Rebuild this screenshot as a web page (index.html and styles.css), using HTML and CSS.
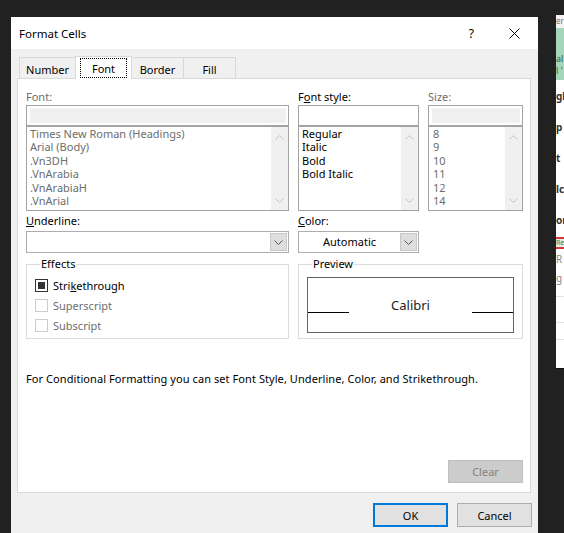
FILE: index.html
```html
<!DOCTYPE html>
<html lang="en">
<head>
<meta charset="utf-8">
<title>Format Cells</title>
<link rel="stylesheet" href="styles.css">
</head>
<body>
<div class="screen">
  <div class="dialog">
    <div class="titlebar">
      <span class="title">Format Cells</span>
      <span class="help">?</span>
      <svg class="close" width="11" height="11" viewBox="0 0 11 11"><path d="M0.5 0.5L10.5 10.5M10.5 0.5L0.5 10.5" stroke="#000" stroke-width="1" fill="none"/></svg>
    </div>
    <div class="body">
      <div class="tabs">
        <div class="tab tab-number">Number</div>
        <div class="tab tab-font active"><span class="focus">Font</span></div>
        <div class="tab tab-border">Border</div>
        <div class="tab tab-fill">Fill</div>
      </div>
      <div class="panel">
        <div class="top-grid">
          <div class="col">
            <div class="label disabled">Font:</div>
            <div class="edit edit-disabled"><div class="edit-fill"></div></div>
            <div class="list">
              <div class="items disabled">
                <div class="item">Times New Roman (Headings)</div>
                <div class="item">Arial (Body)</div>
                <div class="item">.Vn3DH</div>
                <div class="item">.VnArabia</div>
                <div class="item">.VnArabiaH</div>
                <div class="item">.VnArial</div>
              </div>
              <div class="scrollbar">
                <svg width="9" height="5" viewBox="0 0 9 5"><path d="M0.5 4.5L4.5 0.5L8.5 4.5" fill="none" stroke="#c4c4c4"/></svg>
                <svg width="9" height="5" viewBox="0 0 9 5"><path d="M0.5 0.5L4.5 4.5L8.5 0.5" fill="none" stroke="#c4c4c4"/></svg>
              </div>
            </div>
            <div class="label label-second"><u>U</u>nderline:</div>
            <div class="combo">
              <div class="combo-value"></div>
              <div class="combo-btn"><svg width="9" height="5" viewBox="0 0 9 5"><path d="M0.5 0.5L4.5 4.5L8.5 0.5" fill="none" stroke="#555"/></svg></div>
            </div>
          </div>
          <div class="col">
            <div class="label">F<u>o</u>nt style:</div>
            <div class="edit"></div>
            <div class="list">
              <div class="items">
                <div class="item">Regular</div>
                <div class="item">Italic</div>
                <div class="item">Bold</div>
                <div class="item">Bold Italic</div>
              </div>
              <div class="scrollbar">
                <svg width="9" height="5" viewBox="0 0 9 5"><path d="M0.5 4.5L4.5 0.5L8.5 4.5" fill="none" stroke="#c4c4c4"/></svg>
                <svg width="9" height="5" viewBox="0 0 9 5"><path d="M0.5 0.5L4.5 4.5L8.5 0.5" fill="none" stroke="#c4c4c4"/></svg>
              </div>
            </div>
            <div class="label label-second"><u>C</u>olor:</div>
            <div class="combo">
              <div class="combo-value centered">Automatic</div>
              <div class="combo-btn"><svg width="9" height="5" viewBox="0 0 9 5"><path d="M0.5 0.5L4.5 4.5L8.5 0.5" fill="none" stroke="#555"/></svg></div>
            </div>
          </div>
          <div class="col">
            <div class="label disabled">Size:</div>
            <div class="edit edit-disabled"><div class="edit-fill"></div></div>
            <div class="list">
              <div class="items disabled items-size">
                <div class="item">8</div>
                <div class="item">9</div>
                <div class="item">10</div>
                <div class="item">11</div>
                <div class="item">12</div>
                <div class="item">14</div>
              </div>
              <div class="scrollbar">
                <svg width="9" height="5" viewBox="0 0 9 5"><path d="M0.5 4.5L4.5 0.5L8.5 4.5" fill="none" stroke="#c4c4c4"/></svg>
                <svg width="9" height="5" viewBox="0 0 9 5"><path d="M0.5 0.5L4.5 4.5L8.5 0.5" fill="none" stroke="#c4c4c4"/></svg>
              </div>
            </div>
          </div>
        </div>
        <div class="group-grid">
          <fieldset class="group effects">
            <legend>Effects</legend>
            <div class="check-row">
              <span class="checkbox checked"><span class="mark"></span></span>
              <span>Stri<u>k</u>ethrough</span>
            </div>
            <div class="check-row disabled">
              <span class="checkbox off"></span>
              <span>Superscript</span>
            </div>
            <div class="check-row disabled">
              <span class="checkbox off"></span>
              <span>Subscript</span>
            </div>
          </fieldset>
          <fieldset class="group preview">
            <legend>Preview</legend>
            <div class="preview-box">
              <span class="baseline"></span>
              <span class="sample">Calibri</span>
              <span class="baseline"></span>
            </div>
          </fieldset>
        </div>
        <p class="note">For Conditional Formatting you can set Font Style, Underline, Color, and Strikethrough.</p>
        <button class="btn btn-clear" disabled>Clear</button>
      </div>
      <div class="actions">
        <button class="btn btn-ok">OK</button>
        <button class="btn">Cancel</button>
      </div>
    </div>
  </div>
  <div class="side">
    <div class="s-head">er</div>
    <div class="s-green"><span>al</span><span>l '</span></div>
    <div class="s-row">gl</div>
    <div class="s-row">p</div>
    <div class="s-row">t</div>
    <div class="s-row">lc</div>
    <div class="s-row">or</div>
    <div class="s-red">Re</div>
    <div class="s-light">R</div>
    <div class="s-light">g</div>
    <div class="s-sep"></div>
    <div class="s-sep s-sep-2"></div>
    <div class="s-sep s-sep-3"></div>
  </div>
</div>
</body>
</html>
```
FILE: styles.css
```css
* { box-sizing: border-box; }

html, body {
  margin: 0;
  padding: 0;
}

body {
  width: 564px;
  height: 533px;
  overflow: hidden;
  background: #212121;
  font-family: "Noto Sans", "Open Sans", sans-serif;
  font-size: 11px;
  color: #000;
}

.screen {
  display: flex;
  height: 533px;
  overflow: hidden;
}

.dialog {
  flex: 0 0 527px;
  width: 527px;
  height: 540px;
  margin: 17px 0 0 11px;
  background: #f0f0f0;
}

.titlebar {
  height: 32px;
  background: #fff;
  display: flex;
  align-items: center;
  padding-left: 8px;
}

.title {
  font-size: 11.5px;
}

.help {
  margin-left: auto;
  margin-right: 35px;
  font-size: 12px;
}

.close {
  margin-right: 18px;
  display: block;
}

.body {
  padding: 7px 7px 0 6px;
}

/* Tabs */
.tabs {
  display: flex;
  align-items: flex-end;
  height: 22px;
  margin-left: 2px;
}

.tab {
  height: 21px;
  border: 1px solid #d9d9d9;
  border-bottom: none;
  background: #f0f0f0;
  display: flex;
  align-items: center;
  justify-content: center;
  padding-top: 2px;
  margin-left: -1px;
}

.tab-number { width: 57px; margin-left: 0; }
.tab-font { width: 57px; }
.tab-border { width: 53px; }
.tab-fill { width: 53px; }

.tab.active {
  height: 23px;
  margin-bottom: -1px;
  background: #fff;
  position: relative;
  z-index: 1;
  padding: 1px 4px 1px 4px;
  align-items: stretch;
}

.focus {
  flex: 1;
  border: 1px dotted #000;
  display: flex;
  align-items: center;
  justify-content: center;
  padding-top: 1px;
}

/* Panel */
.panel {
  height: 415px;
  background: #fff;
  border: 1px solid #d9d9d9;
  padding: 10px 7px 9px 8px;
  display: flex;
  flex-direction: column;
}

.top-grid {
  display: grid;
  grid-template-columns: 263px 121px 95px;
  column-gap: 9px;
}

.col {
  display: flex;
  flex-direction: column;
}

.label {
  line-height: 15px;
  height: 15px;
  margin-bottom: 1px;
  white-space: nowrap;
}

.label-second {
  margin-top: 2px;
  margin-bottom: 3px;
}

.disabled { color: #6d6d6d; }

.edit {
  height: 21px;
  border: 1px solid #a3a3a3;
  background: #fff;
}

.edit-disabled {
  padding: 2px 2px 2px 3px;
}

.edit-fill {
  height: 100%;
  background: #f0f0f0;
}

.list {
  height: 85px;
  border: 1px solid #a3a3a3;
  display: flex;
  background: #fff;
}

.items {
  flex: 1;
  padding: 0 0 0 3px;
  overflow: hidden;
}

.items-size { padding-left: 4px; }

.item {
  line-height: 13.4px;
  height: 13.4px;
  white-space: nowrap;
}

.scrollbar {
  width: 17px;
  background: #f0f0f0;
  display: flex;
  flex-direction: column;
  align-items: center;
  justify-content: space-between;
  padding: 8px 0 7px;
}

.scrollbar svg { display: block; }

.combo {
  height: 22px;
  border: 1px solid #adadad;
  background: #fff;
  display: flex;
}

.combo-value {
  flex: 1;
  line-height: 19px;
}

.combo-value.centered {
  text-align: center;
}

.combo-btn {
  width: 17px;
  margin: 1px 1px 1px 0;
  background: #dedede;
  border: 1px solid #c8c8c8;
  display: flex;
  align-items: center;
  justify-content: center;
}

.combo-btn svg { display: block; }

/* Group boxes */
.group-grid {
  display: grid;
  grid-template-columns: 263px 225px;
  column-gap: 9px;
  margin-top: 4px;
}

.group {
  margin: 0;
  min-width: 0;
  border: 1px solid #dcdcdc;
  padding: 0;
}

.group legend {
  margin-left: 5px;
  padding: 0 1px;
  line-height: 14px;
  height: 14px;
}

.effects {
  padding: 4px 0 3px 8px;
}

.check-row {
  height: 20px;
  display: flex;
  align-items: center;
  gap: 5px;
  white-space: nowrap;
}

.checkbox {
  width: 13px;
  height: 13px;
  border: 1px solid #333;
  background: #fff;
  padding: 2px;
  flex: 0 0 13px;
}

.checkbox .mark {
  display: block;
  width: 7px;
  height: 7px;
  background: #333;
}

.checkbox.off {
  border-color: #cccccc;
}

.preview {
  padding: 6px 8px 5px;
}

.preview-box {
  height: 56px;
  border: 1px solid #646464;
  display: grid;
  grid-template-columns: 41px 1fr 41px;
  align-items: center;
}

.baseline {
  height: 1px;
  background: #000;
  margin-top: 14px;
}

.sample {
  text-align: center;
  font-size: 13px;
  color: #222;
}

.note {
  margin: 32px 0 0 0;
  line-height: 15px;
  white-space: nowrap;
  letter-spacing: 0.07px;
}

/* Buttons */
.btn {
  font-family: "Noto Sans", "Open Sans", sans-serif;
  font-size: 11px;
  width: 75px;
  height: 23px;
  background: #e1e1e1;
  border: 1px solid #adadad;
  color: #000;
  padding: 0;
  margin: 0;
}

.btn-clear {
  margin-top: auto;
  align-self: flex-end;
  background: #cccccc;
  border-color: #bfbfbf;
  color: #838383;
}

.actions {
  display: flex;
  justify-content: flex-end;
  gap: 9px;
  margin-top: 10px;
  margin-right: -1px;
}

.actions .btn { height: 24px; }

.btn-ok {
  border: 1px solid #0078d7;
  box-shadow: inset 0 0 0 1px #0078d7;
}

/* Background spreadsheet strip */
.side {
  flex: 0 0 8px;
  width: 8px;
  margin-left: auto;
  margin-top: 15px;
  height: 354px;
  background: #fff;
  border-bottom: 1px solid #111;
  overflow: hidden;
  display: flex;
  flex-direction: column;
  font-size: 10px;
  line-height: 12px;
  white-space: nowrap;
}

.s-head {
  height: 13px;
  color: #777;
  background: #f3f3f3;
  font-size: 8px;
}

.s-green {
  height: 52px;
  background: #a5d6b9;
  color: #2f5d43;
  display: flex;
  flex-direction: column;
  justify-content: flex-end;
  gap: 1px;
  padding-bottom: 4px;
  font-size: 9px;
  line-height: 11px;
}

.s-row {
  height: 31px;
  display: flex;
  align-items: center;
  font-weight: bold;
  color: #333;
}

.s-red {
  height: 12px;
  margin-top: 2px;
  border-top: 2px solid #d9383a;
  border-bottom: 2px solid #d9383a;
  background: #dff0e5;
  color: #3a7a55;
  font-size: 7px;
  line-height: 8px;
}

.s-light {
  height: 19px;
  display: flex;
  align-items: center;
  color: #888;
}

.s-sep {
  height: 1px;
  background: #e2e2e2;
  margin-top: 9px;
}

.s-sep-2 { margin-top: 25px; }
.s-sep-3 { margin-top: 16px; }
```
